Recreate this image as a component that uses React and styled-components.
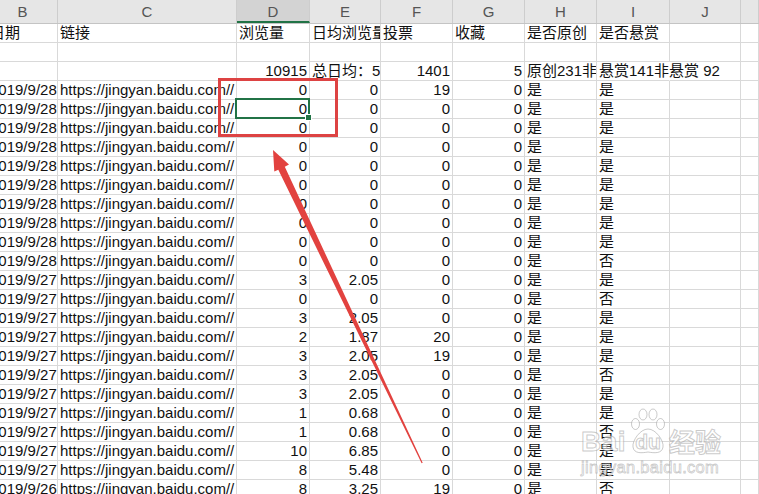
import React from "react";
import styled, { createGlobalStyle } from "styled-components";

const GlobalStyle = createGlobalStyle`
  html, body {
    margin: 0;
    padding: 0;
    background: #ffffff;
    overflow: hidden;
  }
  body {
    font-family: "Liberation Sans", "Noto Sans CJK SC", sans-serif;
  }
`;

const COLS = "70px 179px 73px 71px 72px 72px 72px 73px 71px 1fr";
const LETTERS = ["B", "C", "D", "E", "F", "G", "H", "I", "J", ""];

const rows = [
  ["2019/9/28", 0, 0, 19, 0, "是", "是"],
  ["2019/9/28", 0, 0, 0, 0, "是", "是"],
  ["2019/9/28", 0, 0, 0, 0, "是", "是"],
  ["2019/9/28", 0, 0, 0, 0, "是", "是"],
  ["2019/9/28", 0, 0, 0, 0, "是", "是"],
  ["2019/9/28", 0, 0, 0, 0, "是", "是"],
  ["2019/9/28", 0, 0, 0, 0, "是", "是"],
  ["2019/9/28", 0, 0, 0, 0, "是", "是"],
  ["2019/9/28", 0, 0, 0, 0, "是", "是"],
  ["2019/9/28", 0, 0, 0, 0, "是", "否"],
  ["2019/9/27", 3, 2.05, 0, 0, "是", "是"],
  ["2019/9/27", 0, 0, 0, 0, "是", "否"],
  ["2019/9/27", 3, 2.05, 0, 0, "是", "是"],
  ["2019/9/27", 2, 1.87, 20, 0, "是", "是"],
  ["2019/9/27", 3, 2.05, 19, 0, "是", "是"],
  ["2019/9/27", 3, 2.05, 0, 0, "是", "否"],
  ["2019/9/27", 3, 2.05, 0, 0, "是", "是"],
  ["2019/9/27", 1, 0.68, 0, 0, "是", "是"],
  ["2019/9/27", 1, 0.68, 0, 0, "是", "否"],
  ["2019/9/27", 10, 6.85, 0, 0, "是", "是"],
  ["2019/9/27", 8, 5.48, 0, 0, "是", "是"],
  ["2019/9/26", 8, 3.25, 19, 0, "是", "否"],
];

const LINK = "https://jingyan.baidu.com//";

const Page = styled.div`
  position: relative;
  width: 759px;
  height: 494px;
  overflow: hidden;
`;

const Sheet = styled.div`
  margin-left: -12px;
  display: flex;
  flex-direction: column;
`;

const HeaderRow = styled.div`
  display: grid;
  grid-template-columns: ${COLS};
  height: 24px;
  background: #e6e6e6;
  border-bottom: 1px solid #c4c4c4;
  box-sizing: border-box;
`;

const ColHead = styled.div`
  display: flex;
  align-items: center;
  justify-content: center;
  font-size: 15px;
  color: #555555;
  border-right: 1px solid #cdcdcd;
  box-sizing: border-box;
  background: ${(p) => (p.$active ? "#d3d3d3" : "transparent")};
  border-bottom: ${(p) => (p.$active ? "2px solid #217346" : "none")};
  padding-top: ${(p) => (p.$active ? "2px" : "0")};
`;

const Row = styled.div`
  display: grid;
  grid-template-columns: ${COLS};
  height: 19px;
`;

const Cell = styled.div`
  position: relative;
  box-sizing: border-box;
  border-right: 1px solid ${(p) => (p.$spill ? "transparent" : "#d9d9d9")};
  border-bottom: 1px solid #d9d9d9;
  padding: 0 2px 0 2px;
  font-size: 15px;
  line-height: 18px;
  color: #111;
  white-space: nowrap;
  overflow: ${(p) => (p.$spill || p.$selected ? "visible" : "hidden")};
  text-align: ${(p) => (p.$num ? "right" : "left")};
  z-index: ${(p) => (p.$spill || p.$selected ? 1 : "auto")};
`;

const Selection = styled.span`
  position: absolute;
  top: -2px;
  left: -2px;
  right: -1px;
  bottom: -1px;
  border: 2px solid #217346;
  pointer-events: none;

  &::after {
    content: "";
    position: absolute;
    right: -4px;
    bottom: -4px;
    width: 5px;
    height: 5px;
    background: #217346;
    border: 1px solid #ffffff;
  }
`;

const Overlay = styled.svg`
  position: absolute;
  left: 0;
  top: 0;
  width: 759px;
  height: 494px;
  pointer-events: none;
  z-index: 5;
`;

const Watermark = styled.div`
  position: absolute;
  left: 581px;
  top: 408px;
  z-index: 6;
  display: flex;
  flex-direction: column;
  align-items: flex-start;
  gap: 5px;
  pointer-events: none;
`;

const MarkLine = styled.div`
  display: flex;
  align-items: flex-end;
  height: 46px;
`;

const MarkText = styled.span`
  font-family: ${(p) =>
    p.$cjk ? '"Noto Sans CJK SC", sans-serif' : '"Liberation Sans", sans-serif'};
  font-size: ${(p) => p.$size || 24}px;
  font-weight: bold;
  line-height: ${(p) => (p.$cjk ? 1.05 : 0.86)};
  color: rgba(255, 255, 255, 0.55);
  -webkit-text-stroke: 1px rgba(150, 150, 150, 0.5);
  letter-spacing: ${(p) => p.$spacing || 0}px;
`;

const Paw = styled.div`
  position: relative;
  width: 36px;
  height: 46px;
  display: flex;
  align-items: flex-end;
  justify-content: center;
  margin: 0 3px 0 4px;

  svg {
    position: absolute;
    left: 0;
    top: 0;
  }
`;

const PawLabel = styled(MarkText)`
  position: relative;
  margin-bottom: 3px;
`;

const SubMark = styled.span`
  font-family: "Liberation Sans", sans-serif;
  font-size: 16.5px;
  line-height: 1;
  color: rgba(255, 255, 255, 0.55);
  -webkit-text-stroke: 0.8px rgba(150, 150, 150, 0.5);
  letter-spacing: 0.3px;
`;

const fmt = (v) => (typeof v === "number" ? String(v) : v);

const App = () => {
  return (
    <Page>
      <GlobalStyle />
      <Sheet>
        <HeaderRow>
          {LETTERS.map((l, i) => (
            <ColHead key={i} $active={l === "D"}>
              {l}
            </ColHead>
          ))}
        </HeaderRow>

        <Row>
          <Cell>日期</Cell>
          <Cell>链接</Cell>
          <Cell>浏览量</Cell>
          <Cell>日均浏览量</Cell>
          <Cell>投票</Cell>
          <Cell>收藏</Cell>
          <Cell>是否原创</Cell>
          <Cell>是否悬赏</Cell>
          <Cell />
          <Cell />
        </Row>

        <Row>
          {LETTERS.map((l, i) => (
            <Cell key={i} />
          ))}
        </Row>

        <Row>
          <Cell />
          <Cell />
          <Cell $num>10915</Cell>
          <Cell>总日均：5</Cell>
          <Cell $num>1401</Cell>
          <Cell $num>5</Cell>
          <Cell>原创231非原创2</Cell>
          <Cell $spill>悬赏141非悬赏 92</Cell>
          <Cell />
          <Cell />
        </Row>

        {rows.map((r, idx) => (
          <Row key={idx}>
            <Cell $num>{r[0]}</Cell>
            <Cell>{LINK}</Cell>
            <Cell $num $selected={idx === 1}>
              {fmt(r[1])}
              {idx === 1 && <Selection />}
            </Cell>
            <Cell $num>{fmt(r[2])}</Cell>
            <Cell $num>{fmt(r[3])}</Cell>
            <Cell $num>{fmt(r[4])}</Cell>
            <Cell>{r[5]}</Cell>
            <Cell>{r[6]}</Cell>
            <Cell />
            <Cell />
          </Row>
        ))}
      </Sheet>

      <Overlay viewBox="0 0 759 494">
        <rect
          x="219.5"
          y="79.5"
          width="117"
          height="56"
          fill="none"
          stroke="#dd4343"
          strokeWidth="3"
        />
        <polygon
          fill="#e2423f"
          points="273,150 289,164.6 284.8,166.8 422.7,462.8 421.6,463.3 278.3,169.8 274.3,171.6"
        />
      </Overlay>

      <Watermark>
        <MarkLine>
          <MarkText $size={28} $spacing={0.5}>Bai</MarkText>
          <Paw>
            <svg width="36" height="46" viewBox="0 0 36 46">
              <g fill="rgba(255,255,255,0.55)" stroke="rgba(150,150,150,0.5)" strokeWidth="1">
                <ellipse cx="5.5" cy="16" rx="4" ry="5.5" />
                <ellipse cx="13" cy="6.5" rx="4" ry="5.5" />
                <ellipse cx="23" cy="6.5" rx="4" ry="5.5" />
                <ellipse cx="30.5" cy="16" rx="4" ry="5.5" />
                <path d="M18 21 C 10 21, 2 33, 3 39 C 4 46, 12 45, 18 44 C 24 45, 32 46, 33 39 C 34 33, 26 21, 18 21 Z" />
              </g>
            </svg>
            <PawLabel $size={21}>du</PawLabel>
          </Paw>
          <MarkText $cjk $size={26}>
            经验
          </MarkText>
        </MarkLine>
        <SubMark>jingyan.baidu.com</SubMark>
      </Watermark>
    </Page>
  );
};

export default App;
